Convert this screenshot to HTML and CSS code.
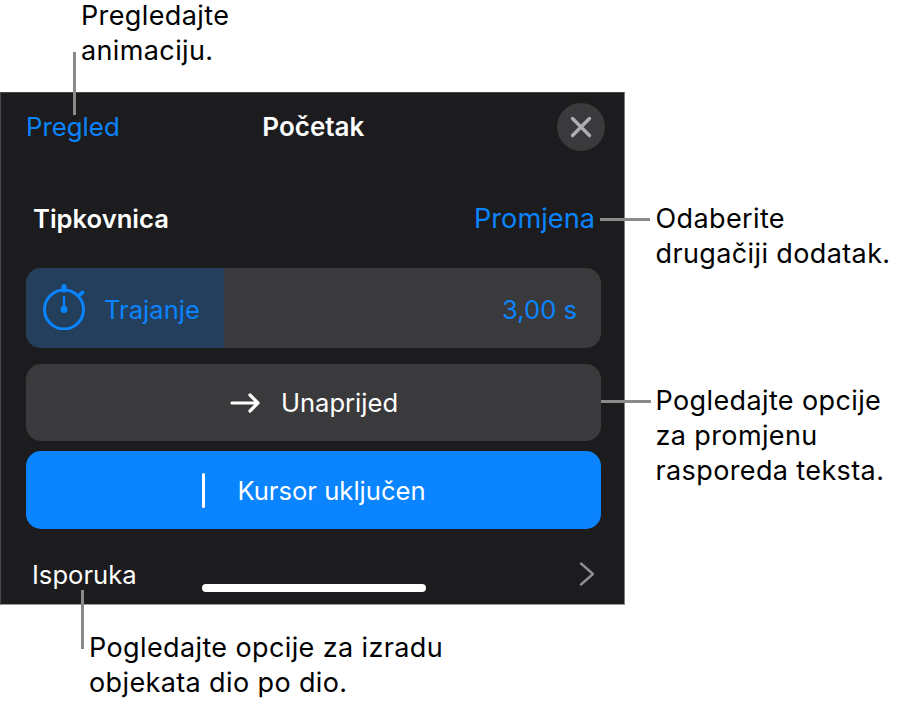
FILE: index.html
```html
<!DOCTYPE html>
<html lang="hr">
<head>
<meta charset="utf-8">
<title>Početak</title>
<link rel="stylesheet" href="styles.css">
</head>
<body>
<div class="page">
  <div class="top-caption"><p class="note">Pregledajte<br>animaciju.</p></div>
  <section class="panel">
    <header class="head">
      <span class="link link-preview">Pregled</span>
      <span class="title">Početak</span>
      <span class="close">
        <svg width="22" height="22" viewBox="0 0 22 22"><path d="M2.500 2.500 L19.500 19.500 M19.500 2.500 L2.500 19.500" fill="none" stroke="#aeaeb2" stroke-width="3.400" stroke-linecap="round"/></svg>
      </span>
    </header>
    <div class="effect">
      <span class="effect-name">Tipkovnica</span>
      <span class="link link-large">Promjena</span>
    </div>
    <div class="duration">
      <div class="duration-fill">
        <svg class="watch" width="46" height="46" viewBox="0 0 46 46">
          <circle cx="23" cy="25.500" r="19.500" fill="none" stroke="#0a84ff" stroke-width="3"/>
          <path d="M23 2.500 V6" stroke="#0a84ff" stroke-width="5" stroke-linecap="round"/>
          <path d="M39 10.500 L41.500 8.500" stroke="#0a84ff" stroke-width="4" stroke-linecap="round"/>
          <path d="M23 12 V25" stroke="#0a84ff" stroke-width="2.200"/>
          <circle cx="23" cy="25.500" r="3.400" fill="#0a84ff"/>
        </svg>
        <span class="duration-text">Trajanje</span>
      </div>
      <span class="duration-text">3,00 s</span>
    </div>
    <div class="option option-dark">
      <svg width="30" height="22" viewBox="0 0 30 22"><path d="M2 11 H28 M20 3 L28 11 L20 19" fill="none" stroke="#fff" stroke-width="3.200" stroke-linecap="round" stroke-linejoin="round"/></svg>
      <span>Unaprijed</span>
    </div>
    <div class="option option-blue">
      <span class="cursor"></span>
      <span>Kursor uključen</span>
    </div>
    <div class="delivery">
      <span>Isporuka</span>
      <svg width="16" height="24" viewBox="0 0 16 24"><path d="M2 1.500 L14 12 L2 22.500" fill="none" stroke="#8e8e93" stroke-width="2.400" stroke-linecap="round" stroke-linejoin="round"/></svg>
    </div>
    <span class="home-bar"></span>
  </section>
  <div class="bottom-caption"><p class="note">Pogledajte opcije za izradu<br>objekata dio po dio.</p></div>

  <span class="line line-v line-preview"></span>
  <span class="line line-v line-delivery"></span>
  <span class="line line-h line-change"></span>
  <span class="line line-h line-layout"></span>
  <p class="note side side-change">Odaberite<br>drugačiji dodatak.</p>
  <p class="note side side-layout">Pogledajte opcije<br>za promjenu<br>rasporeda teksta.</p>
</div>
</body>
</html>
```

FILE: styles.css
```css
* { box-sizing: border-box; }
html, body { margin: 0; padding: 0; background: #fff; }
body { font-family: Inter, "Liberation Sans", sans-serif; }
.page { position: relative; width: 897px; height: 705px; overflow: hidden; }
.note { margin: 0; font-size: 27px; letter-spacing: .38px; line-height: 35px; color: #000; white-space: nowrap; }
.top-caption { display: flex; align-items: flex-end; height: 92px; padding: 0 0 24px 81px; }
.bottom-caption { padding: 25px 0 0 89px; }
.panel {
  position: relative;
  width: 625px;
  height: 513px;
  background: #1c1c1e;
  border: 1px solid #48484a;
  border-right-color: #808082;
  border-bottom-color: #9a9a9a;
  padding: 10px 23px 0 25px;
  color: #fff;
  font-size: 25.600px;
}
.link { color: #0a84ff; }
.link-preview { font-size: 25.800px; }
.link-large { font-size: 27.200px; margin-right: 6px; }
.head { display: flex; align-items: center; justify-content: space-between; height: 46px; margin-right: -4px; }
.title { font-size: 26px; font-weight: 600; margin-right: 50px; }
.close {
  width: 48px; height: 48px; border-radius: 50%; flex: none; margin-top: 2px;
  background: #3a3a3c;
  display: flex; align-items: center; justify-content: center;
}
.effect { display: flex; justify-content: space-between; align-items: center; height: 40px; margin-top: 49px; padding-left: 7px; }
.effect-name { font-weight: 600; }
.duration {
  display: flex; align-items: center; justify-content: space-between;
  height: 80px; margin-top: 30px; border-radius: 15px; overflow: hidden;
  background: #3a3a3c; padding-right: 24px; color: #0a84ff;
}
.duration-fill { display: flex; align-items: center; gap: 17px; width: 198px; height: 100%; padding-left: 15px; background: #243f5c; }
.duration-text { margin-top: 2px; }
.watch { display: block; margin-top: -3px; }
.option { display: flex; align-items: center; justify-content: center; border-radius: 15px; }
.option-dark { height: 77px; margin-top: 16px; background: #3a3a3c; gap: 21px; padding-left: 1px; }
.option-blue { height: 78px; margin-top: 10px; background: #0a84ff; gap: 32px; padding-left: 1px; }
.cursor { width: 3px; height: 35px; background: #fff; border-radius: 1.500px; }
.delivery { display: flex; align-items: center; justify-content: space-between; height: 48px; margin-top: 21px; padding: 0 6px 0 6px; }
.home-bar { position: absolute; left: 201px; top: 491px; width: 224px; height: 8px; border-radius: 4px; background: #fff; }
.line { position: absolute; background: #8a8a8a; }
.line-v { width: 3px; }
.line-h { height: 3px; }
.line-preview { left: 73px; top: 52px; height: 63px; }
.line-delivery { left: 81px; top: 590px; height: 59px; }
.line-change { left: 600px; top: 218px; width: 50px; }
.line-layout { left: 601px; top: 400px; width: 50px; }
.side { position: absolute; left: 655.500px; }
.side-change { top: 201px; }
.side-layout { top: 383px; }
```
